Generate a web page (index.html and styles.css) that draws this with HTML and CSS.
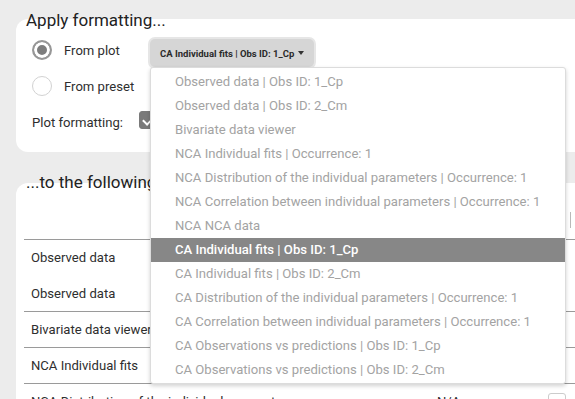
FILE: index.html
```html
<!DOCTYPE html>
<html lang="en">
<head>
  <meta charset="UTF-8" />
  <meta name="viewport" content="width=device-width, initial-scale=1.0" />
  <title>Apply formatting</title>
  <link rel="stylesheet" href="styles.css">
</head>
<body>
  <h2 class="section-title">Apply formatting...</h2>
  <div class="card card-source">
    <div class="option-row">
      <span class="radio checked"></span>
      <span class="option-label">From plot</span>
      <div class="dropdown">
        <button class="dropdown-toggle">CA Individual fits | Obs ID: 1_Cp</button>
        <ul class="dropdown-menu">
          <li>Observed data | Obs ID: 1_Cp</li>
          <li>Observed data | Obs ID: 2_Cm</li>
          <li>Bivariate data viewer</li>
          <li>NCA Individual fits | Occurrence: 1</li>
          <li>NCA Distribution of the individual parameters | Occurrence: 1</li>
          <li>NCA Correlation between individual parameters | Occurrence: 1</li>
          <li>NCA NCA data</li>
          <li class="active">CA Individual fits | Obs ID: 1_Cp</li>
          <li>CA Individual fits | Obs ID: 2_Cm</li>
          <li>CA Distribution of the individual parameters | Occurrence: 1</li>
          <li>CA Correlation between individual parameters | Occurrence: 1</li>
          <li>CA Observations vs predictions | Obs ID: 1_Cp</li>
          <li>CA Observations vs predictions | Obs ID: 2_Cm</li>
        </ul>
      </div>
    </div>
    <div class="option-row">
      <span class="radio"></span>
      <span class="option-label">From preset</span>
    </div>
    <div class="option-row plot-formatting">
      <span>Plot formatting:</span>
      <span class="checkbox checked"></span>
    </div>
  </div>

  <h2 class="section-title second">...to the following</h2>
  <div class="card card-targets">
    <table class="targets">
      <colgroup>
        <col class="col-name">
        <col class="col-value">
        <col class="col-check">
      </colgroup>
      <thead>
        <tr><th></th><th></th><th><span class="header-mark"></span></th></tr>
      </thead>
      <tbody>
        <tr class="no-line"><td>Observed data</td><td></td><td><span class="checkbox"></span></td></tr>
        <tr><td>Observed data</td><td></td><td><span class="checkbox"></span></td></tr>
        <tr><td>Bivariate data viewer</td><td></td><td><span class="checkbox"></span></td></tr>
        <tr><td>NCA Individual fits</td><td></td><td><span class="checkbox"></span></td></tr>
        <tr><td>NCA Distribution of the individual parameters</td><td>N/A</td><td><span class="checkbox"></span></td></tr>
      </tbody>
    </table>
  </div>
</body>
</html>
```

FILE: styles.css
```css
html, body { overflow: hidden; }
body { margin: 0; padding: 8px 0 0 16px; background: #ececec; font-family: Roboto, "Liberation Sans", sans-serif; color: #2e2e2e; font-size: 13.1px; }

.section-title { position: relative; z-index: 1; margin: 0 0 -13px 10px; font-size: 17px; font-weight: 400; line-height: 24px; color: #222; }
.section-title.second { margin-top: 18px; margin-bottom: -11px; }

.card { background: #fff; border-radius: 12px 0 0 12px; margin-right: -40px; }
.card-source { padding: 13px 0 12px 16px; }

.option-row { display: flex; align-items: center; height: 36px; }
.option-label { width: 86px; }
.radio { width: 20px; height: 20px; box-sizing: border-box; border-radius: 50%; border: 1.5px solid #d2d2d2; margin-right: 12px; }
.radio.checked { border: 2px solid #979797; background: #7d7d7d; box-shadow: inset 0 0 0 3px #fff; }

.plot-formatting { gap: 16px; }
.checkbox { display: inline-block; width: 18px; height: 18px; box-sizing: border-box; border-radius: 3px; border: 1px solid #ccc; background: #fff; }
.checkbox.checked { background: #7a7a7a; border-color: #7a7a7a; position: relative; margin-top: -4px; }
.checkbox.checked::after { content: ""; position: absolute; left: 5px; top: 2px; width: 5px; height: 9px; border: solid #fff; border-width: 0 2.5px 2.5px 0; transform: rotate(45deg); }

.dropdown { position: relative; align-self: flex-start; margin-top: 7px; }
.dropdown-toggle { font-family: inherit; font-size: 9.5px; font-weight: 700; color: #2a2a2a; background: #d6d6d6; border: none; border-radius: 5px; height: 28px; padding: 0 10px; box-shadow: 0 0 0 2px #e6e6e6; }
.dropdown-toggle::after { content: ""; display: inline-block; margin-left: 4px; vertical-align: 2px; border-top: 4px solid #333; border-left: 3px solid transparent; border-right: 3px solid transparent; }

.dropdown-menu { position: absolute; z-index: 5; top: 28px; left: 0; width: 416px; box-sizing: border-box; margin: 0; padding: 2px 0 1px; list-style: none; background: #fff; border: 1px solid #dcdcdc; border-radius: 3px; box-shadow: 0 2px 4px rgba(0,0,0,0.18); }
.dropdown-menu li { height: 24px; line-height: 24px; padding-left: 24px; color: #a3a3a3; white-space: nowrap; }
.dropdown-menu li.active { background: #878787; color: #fff; font-weight: 500; }

.card-targets { padding: 0 0 40px 8px; }
.targets { border-collapse: collapse; width: 580px; table-layout: fixed; }
.col-name { width: 406px; }
.col-value { width: 118px; }
.targets th { height: 56px; padding: 0; text-align: left; }
.header-mark { display: inline-block; width: 1px; height: 16px; margin: 20px 0 0 22px; background: #b9b9b9; }
.targets td { height: 35px; padding: 0 0 0 7px; border-top: 1px solid #9a9a9a; white-space: nowrap; }
.targets tr.no-line + tr td { border-top: none; height: 36px; }
.targets td .checkbox { display: block; margin-left: -7px; }
```
